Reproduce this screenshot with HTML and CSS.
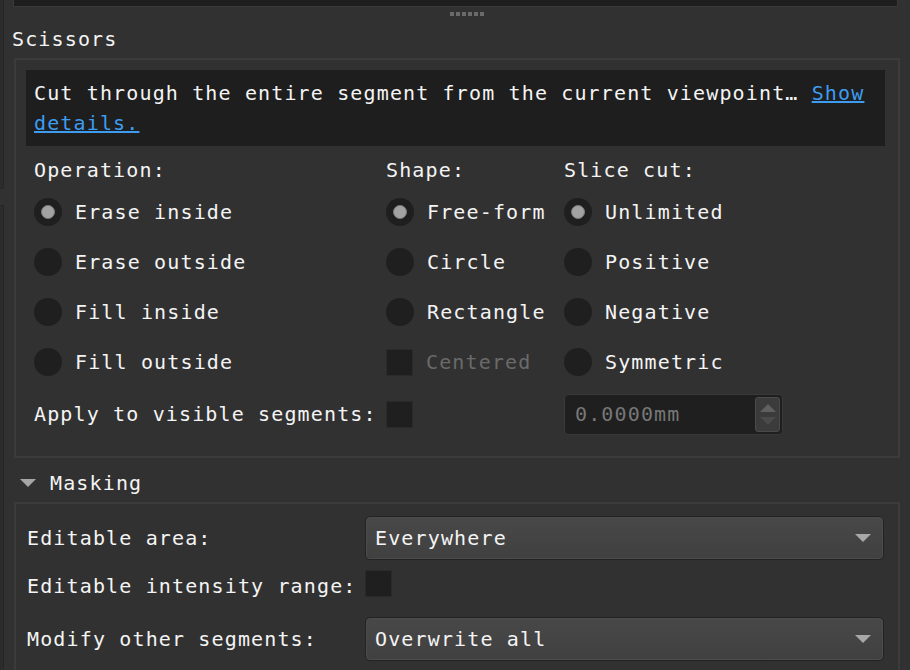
FILE: index.html
```html
<!DOCTYPE html>
<html>
<head>
<meta charset="utf-8">
<link rel="stylesheet" href="styles.css">
</head>
<body>
<div class="page">
  <div class="edge"><div class="edge-a"></div><div class="edge-b"></div></div>
  <div class="main">
    <div class="topbar"></div>
    <div class="grip"><span></span><span></span><span></span><span></span><span></span><span></span></div>
    <div class="title">Scissors</div>
    <section class="group scissors">
      <div class="desc">Cut through the entire segment from the current viewpoint… <a href="#" class="link">Show details.</a></div>
      <div class="opts">
        <div class="hdr">Operation:</div>
        <div class="hdr">Shape:</div>
        <div class="hdr">Slice cut:</div>

        <div class="opt"><span class="radio on"></span><span>Erase inside</span></div>
        <div class="opt"><span class="radio on"></span><span>Free-form</span></div>
        <div class="opt"><span class="radio on"></span><span>Unlimited</span></div>

        <div class="opt"><span class="radio"></span><span>Erase outside</span></div>
        <div class="opt"><span class="radio"></span><span>Circle</span></div>
        <div class="opt"><span class="radio"></span><span>Positive</span></div>

        <div class="opt"><span class="radio"></span><span>Fill inside</span></div>
        <div class="opt"><span class="radio"></span><span>Rectangle</span></div>
        <div class="opt"><span class="radio"></span><span>Negative</span></div>

        <div class="opt"><span class="radio"></span><span>Fill outside</span></div>
        <div class="opt disabled"><span class="check"></span><span>Centered</span></div>
        <div class="opt"><span class="radio"></span><span>Symmetric</span></div>

        <div class="opt apply"><span>Apply to visible segments:</span></div>
        <div class="opt apply"><span class="check"></span></div>
        <div class="opt apply">
          <div class="spin">
            <span class="spin-val">0.0000mm</span>
            <span class="spin-btns"><span class="up"></span><span class="down"></span></span>
          </div>
        </div>
      </div>
    </section>
    <div class="collapse"><span class="tri"></span><span>Masking</span></div>
    <section class="group masking">
      <div class="mgrid">
        <div class="mlabel">Editable area:</div>
        <div class="combo"><span>Everywhere</span><span class="arrow"></span></div>
        <div class="mlabel top">Editable intensity range:</div>
        <div class="mcell top"><span class="check"></span></div>
        <div class="mlabel">Modify other segments:</div>
        <div class="combo"><span>Overwrite all</span><span class="arrow"></span></div>
      </div>
    </section>
  </div>
</div>
</body>
</html>
```
FILE: styles.css
```css
html, body {
  margin: 0;
  padding: 0;
  background: #313131;
  height: 100%;
  overflow: hidden;
}
body {
  font-family: "DejaVu Sans Mono", "Liberation Mono", monospace;
  font-size: 20px;
  letter-spacing: 1.14px;
  line-height: 24px;
  color: #f4f4f4;
}
.page {
  display: flex;
  align-items: flex-start;
}
.edge {
  width: 4px;
  display: flex;
  flex-direction: column;
  flex: none;
}
.edge-a {
  height: 188px;
  border-right: 1px solid #262626;
  border-bottom: 1px solid #262626;
  background: #2c2c2c;
}
.edge-b {
  margin-top: 16px;
  height: 500px;
  border-right: 1px solid #262626;
  border-top: 1px solid #262626;
  background: #2c2c2c;
}
.main {
  margin-left: 8px;
  width: 888px;
  flex: none;
}
.topbar {
  height: 6px;
  margin: 0 2px 0 1px;
  background: #1e1e1e;
  border: 1px solid #393939;
  border-top: none;
}
.grip {
  display: flex;
  justify-content: center;
  gap: 2px;
  margin-top: 5px;
  padding-left: 22px;
}
.grip span {
  width: 4px;
  height: 4px;
  background: #6a6a6a;
}
.title {
  margin-top: 11px;
  height: 24px;
}
.group {
  margin: 7px 0 0 2px;
  border: 2px solid #3b3b3b;
  box-sizing: border-box;
  width: 886px;
}
.scissors {
  padding: 10px 13px 15px 10px;
}
.desc {
  background: #1e1e1e;
  padding: 8px 8px;
  line-height: 30px;
  height: 60px;
}
.link {
  color: #3d9cf0;
  text-decoration: underline;
}
.opts {
  margin-top: 7px;
  padding-left: 8px;
  display: grid;
  grid-template-columns: 352px 178px 1fr;
  grid-template-rows: 34px 50px 50px 50px 50px 54px;
}
.hdr {
  align-self: center;
  white-space: nowrap;
}
.opt {
  display: flex;
  align-items: center;
  gap: 13px;
  white-space: nowrap;
}
.opt.disabled {
  color: #6a6a6a;
}
.radio {
  width: 28px;
  height: 28px;
  border-radius: 50%;
  background: #1f1f1f;
  display: flex;
  align-items: center;
  justify-content: center;
  flex: none;
}
.radio.on::after {
  content: "";
  width: 12px;
  height: 12px;
  border-radius: 50%;
  background: #a3a3a3;
  border: 1px solid #7c7c7c;
}
.check {
  display: block;
  width: 25px;
  height: 25px;
  background: #1f1f1f;
  border: 1px solid #2a2a2a;
  flex: none;
}
.spin {
  width: 219px;
  height: 41px;
  box-sizing: border-box;
  background: #1f1f1f;
  border: 1px solid #393939;
  border-radius: 4px;
  display: flex;
  align-items: center;
  justify-content: space-between;
  padding: 2px 2px 2px 10px;
}
.spin-val {
  color: #777;
}
.spin-btns {
  width: 25px;
  height: 35px;
  box-sizing: border-box;
  background: #3b3b3b;
  border: 1px solid #4a4a4a;
  border-radius: 3px;
  display: flex;
  flex-direction: column;
  align-items: center;
  justify-content: center;
  gap: 5px;
}
.up {
  width: 0;
  height: 0;
  border-left: 8px solid transparent;
  border-right: 8px solid transparent;
  border-bottom: 8px solid #606060;
}
.down {
  width: 0;
  height: 0;
  border-left: 8px solid transparent;
  border-right: 8px solid transparent;
  border-top: 8px solid #4a4a4a;
}
.collapse {
  height: 44px;
  box-sizing: border-box;
  padding: 6px 0 0 8px;
  display: flex;
  align-items: center;
}
.tri {
  width: 0;
  height: 0;
  border-left: 8px solid transparent;
  border-right: 8px solid transparent;
  border-top: 8px solid #a6a6a6;
  margin-right: 14px;
}
.masking {
  margin-top: 0;
  padding: 12px 14px 12px 11px;
}
.mgrid {
  display: grid;
  grid-template-columns: 338px 1fr;
  grid-template-rows: 44px 37px 44px;
  row-gap: 10px;
  align-items: center;
}
.mlabel {
  white-space: nowrap;
}
.top {
  align-self: start;
}
.mlabel.top {
  margin-top: 4px;
}
.combo {
  height: 44px;
  box-sizing: border-box;
  border: 1px solid #232323;
  border-radius: 5px;
  background: linear-gradient(#484848, #404040);
  box-shadow: inset 0 0 0 1px #4c4c4c;
  display: flex;
  align-items: center;
  justify-content: space-between;
  padding: 0 12px 0 9px;
}
.arrow {
  width: 0;
  height: 0;
  border-left: 8px solid transparent;
  border-right: 8px solid transparent;
  border-top: 8px solid #a8a8a8;
}
```
